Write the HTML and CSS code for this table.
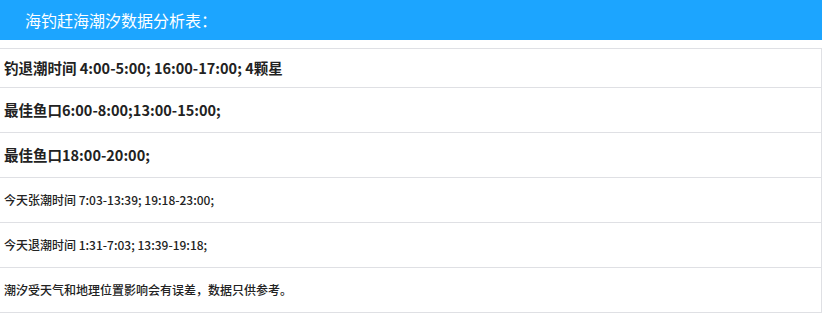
FILE: index.html
```html
<!DOCTYPE html>
<html lang="zh">
<head>
<meta charset="utf-8">
<link rel="stylesheet" href="styles.css">
</head>
<body>
<div class="header">海钓赶海潮汐数据分析表：</div>
<div class="table">
  <div class="row first big">钓退潮时间 4:00-5:00; 16:00-17:00; 4颗星</div>
  <div class="row big">最佳鱼口6:00-8:00;13:00-15:00;</div>
  <div class="row big">最佳鱼口18:00-20:00;</div>
  <div class="row small">今天张潮时间 7:03-13:39; 19:18-23:00;</div>
  <div class="row small">今天退潮时间 1:31-7:03; 13:39-19:18;</div>
  <div class="row small">潮汐受天气和地理位置影响会有误差，数据只供参考。</div>
</div>
</body>
</html>
```
FILE: styles.css
```css
html, body {
  margin: 0;
  padding: 0;
  background: #fff;
}
body {
  font-family: "Noto Sans CJK SC", "Noto Sans", sans-serif;
  color: #222;
}
.header {
  height: 40px;
  background: #1ca5ff;
  color: #fff;
  font-size: 16px;
  display: flex;
  align-items: center;
  padding-left: 25px;
}
.table {
  margin-top: 8px;
  border-top: 1px solid #dfe0e4;
  border-right: 1px solid #dfe0e4;
}
.row {
  display: flex;
  align-items: center;
  height: 42px;
  padding-bottom: 2px;
  border-bottom: 1px solid #dfe0e4;
  padding-left: 4px;
}
.row.first {
  height: 36px;
}
.big {
  font-size: 14.5px;
  font-weight: bold;
}
.small {
  font-size: 12px;
  font-weight: 500;
}
```
